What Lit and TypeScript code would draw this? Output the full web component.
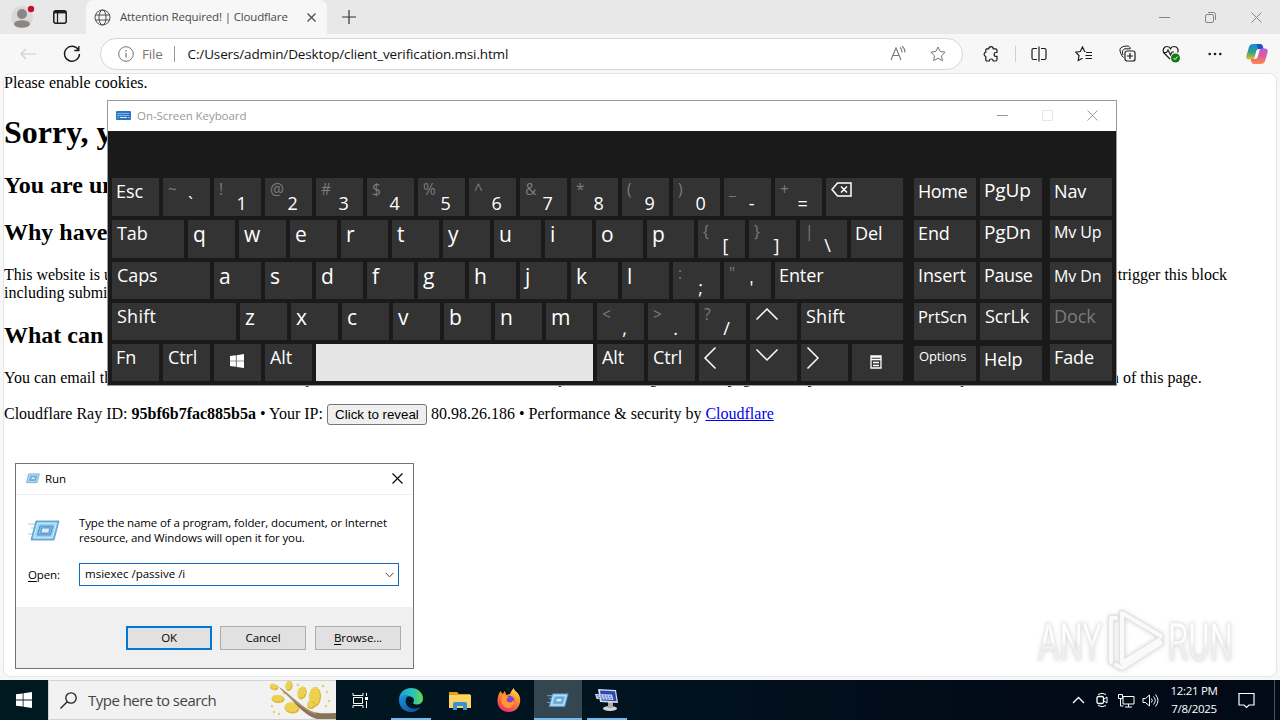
import { LitElement, css, html, svg, nothing, TemplateResult } from 'lit';
import { customElement, property } from 'lit/decorators.js';
import { classMap } from 'lit/directives/class-map.js';
import { styleMap } from 'lit/directives/style-map.js';

interface Key {
  label?: string;
  shift?: string;
  w?: number;
  cls?: string;
  icon?: TemplateResult;
}

const icon = (w: number, h: number, body: TemplateResult) => html`
  <svg xmlns="http://www.w3.org/2000/svg" width=${w} height=${h} viewBox="0 0 ${w} ${h}" fill="none" stroke="currentColor">${body}</svg>`;

const runIcon = (w: number, h: number) => html`
  <svg width=${w} height=${h} viewBox="0 0 32 22">
    <path d="M0 4h9M3 8h5M0 14h5" stroke="#a9cde6" stroke-width="1"/>
    <path d="M8 1h23l-5 19H3z" fill="#6fb3e0" stroke="#4d95c8" stroke-width=".8"/>
    <path d="M9.500 3h19l-4 15h-19z" fill="#9fd2f2" stroke="#d5edfb" stroke-width="1"/>
    <path d="M12 6h13l-2.500 9h-13z" fill="#7dbce6" stroke="#3d86bd" stroke-width=".8"/>
    <path d="M14 8h8l-1.300 5h-8z" fill="#d9ecf8" stroke="#3d86bd" stroke-width=".8"/>
  </svg>`;

const windowsLogo = (size: number) => html`
  <svg width=${size} height=${size} viewBox="0 0 16 16" fill="#fff">
    <path d="M0 2.300 6.700 1.400V7.600H0zM7.500 1.300 16 0V7.600H7.500zM0 8.400H6.700V14.600L0 13.700zM7.500 8.400H16V16L7.500 14.800z"/>
  </svg>`;

const arrow = (w: number, h: number, d: string) => icon(w, h, svg`<path d=${d} stroke-width="1.500"/>`);

const letters = (s: string): Key[] => [...s].map((label) => ({ label, cls: 'letter' }));
const pairs = (s: string): Key[] => s.split(' ').map((p) => ({ shift: p[0], label: p[1] }));

const MAIN_ROWS: Key[][] = [
  [
    { label: 'Esc', cls: 'edge' },
    ...pairs('~` !1 @2 #3 $4 %5 ^6 &7 *8 (9 )0 _- +='),
    {
      w: 77,
      icon: icon(21, 15, svg`<path d="M6.500 1H20v13H6.500L1 7.500zM10 4.500l6 6M16 4.500l-6 6" stroke-width="1.500"/>`),
      cls: 'back',
    },
  ],
  [{ label: 'Tab', w: 72 }, ...letters('qwertyuiop'), ...pairs('{[ }] |\\'), { label: 'Del', w: 52, cls: 'edge' }],
  [{ label: 'Caps', w: 98 }, ...letters('asdfghjkl'), ...pairs(':; "\''), { label: 'Enter', w: 128, cls: 'edge' }],
  [
    { label: 'Shift', w: 124, cls: 'wide' },
    ...letters('zxcvbnm'),
    ...pairs('<, >. ?/'),
    { cls: 'up', icon: arrow(24, 14, 'M1.500 12.500 12 2l10.500 10.500') },
    { label: 'Shift', w: 102, cls: 'wide' },
  ],
  [
    { label: 'Fn', cls: 'edge' },
    { label: 'Ctrl' },
    { cls: 'win', icon: windowsLogo(14) },
    { label: 'Alt' },
    { cls: 'space', w: 277 },
    { label: 'Alt' },
    { label: 'Ctrl' },
    { cls: 'left', icon: arrow(14, 24, 'M12.500 1.500 2 12l10.500 10.500') },
    { cls: 'down', icon: arrow(24, 14, 'M1.500 1.500 12 12 22.500 1.500') },
    { cls: 'right', icon: arrow(14, 24, 'M1.500 1.500 12 12 1.500 22.500') },
    {
      w: 51,
      cls: 'menu',
      icon: icon(12, 14, svg`<path d="M1 1h10v12H1zM1 2h10M1 4.500h10M3 7.500h6M3 10.500h6" stroke-width="1.300"/>`),
    },
  ],
];

const NAV_ROWS: Key[][] = [
  [{ label: 'Home', cls: 'edge tight' }, { label: 'PgUp', cls: 'edge tall' }],
  [{ label: 'End', cls: 'edge' }, { label: 'PgDn', cls: 'edge tall' }],
  [{ label: 'Insert', cls: 'edge' }, { label: 'Pause', cls: 'edge tight' }],
  [{ label: 'PrtScn', cls: 'edge medium' }, { label: 'ScrLk' }],
  [{ label: 'Options', cls: 'tiny short' }, { label: 'Help', cls: 'edge short' }],
];

const SIDE_ROWS: Key[][] = [
  [{ label: 'Nav', cls: 'edge' }],
  [{ label: 'Mv Up', cls: 'edge small' }],
  [{ label: 'Mv Dn', cls: 'edge small lower' }],
  [{ label: 'Dock', cls: 'edge off' }],
  [{ label: 'Fade', cls: 'edge' }],
];

@customElement('osk-block')
export class OskBlock extends LitElement {
  @property({ attribute: false }) rows: Key[][] = [];
  @property({ type: Number }) keyWidth = 47;

  private _key(k: Key) {
    const classes: Record<string, boolean> = { key: true, pair: !!k.shift };
    (k.cls ?? '').split(' ').filter(Boolean).forEach((c) => (classes[c] = true));
    return html`
      <div class=${classMap(classes)} style=${styleMap({ width: `${k.w ?? this.keyWidth}px` })}>
        ${k.shift ? html`<span class="shifted">${k.shift}</span>` : nothing}
        ${k.label ? html`<span class="label">${k.label}</span>` : nothing}
        ${k.icon ?? nothing}
      </div>`;
  }

  render() {
    return this.rows.map((row) => html`<div class="row">${row.map((k) => this._key(k))}</div>`);
  }

  static styles = css`
    :host {
      display: grid;
      grid-template-rows: 38px 38px 37px 37px 37px;
      gap: 4px;
      color: #fff;
      font: 18px/24px 'Open Sans', sans-serif;
    }
    .row {
      display: flex;
      gap: 4px;
    }
    .key {
      box-sizing: border-box;
      background: #333;
      display: flex;
      padding: 1px 0 0 5px;
      white-space: nowrap;
      letter-spacing: -0.1px;
    }
    .edge {
      padding-left: 4px;
    }
    .letter {
      font-size: 21px;
      padding-top: 2px;
    }
    .wide {
      letter-spacing: 0.25px;
    }
    .shifted {
      color: #7c7c7c;
      font-size: 15.5px;
      line-height: 21px;
      width: 11px;
    }
    .pair .label {
      margin-top: 12px;
      width: 23px;
      text-align: center;
    }
    .space {
      background: #e5e5e5;
    }
    .back {
      padding-top: 4px;
    }
    .up,
    .down {
      padding-top: 4px;
    }
    .left,
    .right {
      padding-top: 2px;
    }
    .left {
      padding-left: 4px;
    }
    .menu {
      padding: 11px 0 0 18px;
    }
    .win {
      padding: 10px 0 0 16px;
    }
    .tall {
      font-size: 19px;
      padding-top: 0;
    }
    .tight {
      letter-spacing: -0.4px;
    }
    .medium {
      font-size: 16.5px;
      padding-top: 2px;
    }
    .small {
      font-size: 16px;
      line-height: 23px;
    }
    .lower {
      padding-top: 3px;
    }
    .tiny {
      font-size: 13px;
      line-height: 20px;
      padding-top: 0;
    }
    .short {
      margin-top: 2px;
    }
    .off {
      color: #7c7c7c;
    }
  `;
}

@customElement('osk-window')
export class OskWindow extends LitElement {
  render() {
    return html`
      <div class="title">
        <svg width="15" height="9" viewBox="0 0 15 9">
          <rect width="15" height="9" rx="1" fill="#2a78c5"/>
          <path d="M1.500 2.500h12M1.500 4.500h12" stroke="#d5e7f7" stroke-dasharray="1 1"/>
          <path d="M1.500 6.500h1M4 6.500h7M12.500 6.500h1" stroke="#d5e7f7"/>
        </svg>
        <span class="name">On-Screen Keyboard</span>
        ${icon(11, 11, svg`<path d="M0 5.500h11"/>`)}
        <span class="max">${icon(11, 11, svg`<path d="M.5.500h10v10H.500z"/>`)}</span>
        ${icon(11, 11, svg`<path d="M.5.500l10 10M10.500.500l-10 10"/>`)}
      </div>
      <div class="body">
        <osk-block .rows=${MAIN_ROWS}></osk-block>
        <osk-block .rows=${NAV_ROWS} .keyWidth=${62}></osk-block>
        <osk-block class="side" .rows=${SIDE_ROWS} .keyWidth=${62}></osk-block>
      </div>
    `;
  }

  static styles = css`
    :host {
      display: flex;
      flex-direction: column;
      box-sizing: border-box;
      width: 1010px;
      height: 286px;
      border: 1px solid #9a9a9a;
      background: #1a1a1a;
    }
    .title {
      display: flex;
      align-items: center;
      box-sizing: border-box;
      height: 30px;
      background: #fff;
      color: #999;
      padding: 0 18px 2px 8px;
      font: 11.5px 'Open Sans', sans-serif;
    }
    .name {
      margin-left: 6px;
      flex: 1;
      letter-spacing: -0.06px;
    }
    .title svg + span:not(.name),
    .max + svg {
      margin-left: 34px;
    }
    .max {
      color: #e8e8e8;
      display: flex;
    }
    .body {
      display: flex;
      padding: 47px 0 0 4px;
      gap: 11px;
    }
    .side {
      margin-left: -3px;
    }
  `;
}

@customElement('run-dialog')
export class RunDialog extends LitElement {
  render() {
    return html`
      <div class="title">
        ${runIcon(15, 11)}
        <span>Run</span>
        ${icon(11, 11, svg`<path d="M.5.500l10 10M10.500.500l-10 10" stroke-width="1.100"/>`)}
      </div>
      <div class="content">
        <div class="intro">
          ${runIcon(32, 22)}
          <p>Type the name of a program, folder, document, or Internet<br />resource, and Windows will open it for you.</p>
        </div>
        <div class="open">
          <label><u>O</u>pen:</label>
          <div class="combo">
            <span>msiexec /passive /i</span>
            ${icon(9, 6, svg`<path d="M.5.800l4 4 4-4"/>`)}
          </div>
        </div>
      </div>
      <div class="footer">
        <div class="btn primary">OK</div>
        <div class="btn">Cancel</div>
        <div class="btn last"><span><u>B</u>rowse...</span></div>
      </div>
    `;
  }

  static styles = css`
    :host {
      display: flex;
      flex-direction: column;
      box-sizing: border-box;
      width: 399px;
      height: 206px;
      border: 1px solid #70757a;
      background: #fff;
      color: #000;
      font: 11.5px/15px 'Open Sans', sans-serif;
      letter-spacing: -0.12px;
    }
    .title {
      display: flex;
      align-items: center;
      box-sizing: border-box;
      height: 31px;
      padding: 0 10px 2px 9px;
      border-bottom: 1px solid #f0f0f0;
    }
    .title span {
      flex: 1;
      margin-left: 5px;
    }
    .content {
      flex: 1;
      padding: 20px 14px 0 12px;
    }
    .intro {
      display: flex;
      gap: 19px;
    }
    .intro svg {
      margin-top: 5px;
    }
    p {
      margin: 0;
      white-space: nowrap;
    }
    .open {
      display: flex;
      align-items: center;
      margin-top: 18px;
    }
    label {
      width: 51px;
    }
    u {
      text-underline-offset: 2px;
      text-decoration-thickness: 1px;
    }
    .combo {
      flex: 1;
      display: flex;
      align-items: center;
      justify-content: space-between;
      box-sizing: border-box;
      height: 23px;
      border: 1px solid #0f6cbd;
      padding: 0 4px 2px 5px;
      letter-spacing: 0;
    }
    .combo svg {
      color: #444;
      margin-top: 3px;
    }
    .footer {
      display: flex;
      justify-content: flex-end;
      gap: 8px;
      height: 42px;
      padding: 19px 12px 0 0;
      background: #f0f0f0;
    }
    .btn {
      display: flex;
      align-items: center;
      justify-content: center;
      box-sizing: border-box;
      width: 86px;
      height: 24px;
      padding-bottom: 2px;
      border: 1px solid #adadad;
      background: #e1e1e1;
    }
    .primary {
      border: 2px solid #0078d7;
    }
    .last {
      margin-left: 1px;
    }
  `;
}

@customElement('edge-browser')
export class EdgeBrowser extends LitElement {
  private _tabs() {
    return html`
      <div class="tabs">
        <div class="profile">
          <svg width="28" height="24" viewBox="0 0 28 24">
            <circle cx="12" cy="13" r="11" fill="#d9d9d9"/>
            <circle cx="12" cy="10" r="5" fill="#8b8785"/>
            <ellipse cx="12" cy="20" rx="8" ry="3.800" fill="#8b8785"/>
            <circle cx="21" cy="5" r="3.200" fill="#c50f2b"/>
          </svg>
        </div>
        <div class="tabmenu">
          ${icon(14, 14, svg`<rect x=".8" y=".8" width="12.400" height="12.400" rx="2" stroke-width="1.500"/><path d="M1 2.200h12" stroke-width="2.400"/><path d="M4.500 3v10" stroke-width="1.200"/>`)}
        </div>
        <div class="tab">
          ${icon(17, 17, svg`<circle cx="8.500" cy="8.500" r="7.500"/><ellipse cx="8.500" cy="8.500" rx="3.500" ry="7.500"/><path d="M1.500 6h14M1.500 11h14"/>`)}
          <span>Attention Required! | Cloudflare</span>
          ${icon(9, 9, svg`<path d="M.5.500l8 8M8.500.500l-8 8" stroke-width="1.200"/>`)}
        </div>
        <div class="plus">${icon(14, 14, svg`<path d="M7 0v14M0 7h14" stroke-width="1.200"/>`)}</div>
        <div class="controls">
          ${icon(11, 11, svg`<path d="M0 5.500h11"/>`)}
          ${icon(11, 11, svg`<rect x=".5" y="2.500" width="8" height="8" rx="1.500"/><path d="M3 .500h5.500a2 2 0 0 1 2 2V8"/>`)}
          ${icon(11, 11, svg`<path d="M.5.500l10 10M10.500.500l-10 10"/>`)}
        </div>
      </div>`;
  }

  private _toolbar() {
    return html`
      <div class="toolbar">
        <div class="back">${icon(16, 12, svg`<path d="M16 6H1M6 1 1 6l5 5" stroke-width="1.100"/>`)}</div>
        <div class="reload">${icon(18, 18, svg`<path d="M15.500 5A7.500 7.500 0 1 0 16.500 9M15.800 1v4.500h-4.500" stroke-width="1.400"/>`)}</div>
        <div class="address">
          ${icon(16, 16, svg`<circle cx="8" cy="8" r="7.300"/><path d="M8 7v4.500M8 4.300v1.400" stroke-width="1.200"/>`)}
          <span class="scheme">File</span>
          <span class="url">C:/Users/admin/Desktop/client_verification.msi.html</span>
          ${icon(17, 15, svg`<path d="M1 14 6 2l5 12M2.800 9.500h6.400M10 1.500a6 6 0 0 1 2 5M12 0a8 8 0 0 1 3 6.500" stroke-width="1.100"/>`)}
          ${icon(16, 16, svg`<path d="M8 1l2.200 4.500 4.900.700-3.600 3.500.9 4.900L8 12.300l-4.400 2.300.9-4.900L.900 6.200l4.900-.700z" stroke-linejoin="round"/>`)}
        </div>
        <div class="tool ext">${icon(16, 16, svg`<path d="M3.500 2.800h2.300a2.200 2.200 0 0 1 4.400 0h2.300a1.500 1.500 0 0 1 1.500 1.500v2.200h-1a1.900 1.900 0 0 0 0 3.800h1v3.200a1.500 1.500 0 0 1-1.500 1.500h-2.300a2 2 0 0 0-4 0H3.500A1.500 1.500 0 0 1 2.800 13.500v-3a2.200 2.200 0 0 1 0-4.300V4.300a1.500 1.500 0 0 1 .7-1.500z" stroke-linejoin="round" stroke-width="1.200"/>`)}</div>
        <div class="sep"></div>
        <div class="tool">${icon(16, 16, svg`<path d="M6 2.500H2.500a1.500 1.500 0 0 0-1.500 1.500v8a1.500 1.500 0 0 0 1.500 1.500H6M10 2.500h3.500A1.500 1.500 0 0 1 15 4v8a1.500 1.500 0 0 1-1.500 1.500H10M8 .500v15" stroke-width="1.200"/>`)}</div>
        <div class="tool">${icon(17, 16, svg`<path d="M10.500 5.500H9.700L7.500 1 5.300 5.500.700 6.200 4 9.500l-.8 5 4.300-2.300M11 6.500h6M10.500 9.500H17M10.500 12.500H17" stroke-width="1.200"/>`)}</div>
        <div class="tool">${icon(17, 17, svg`<rect x="6" y="6" width="10" height="10" rx="2" stroke-width="1.200"/><path d="M11 8v6M8 11h6" stroke-width="1.200"/><path d="M4.500 12.500C2.500 11 .500 6 1 4.200c.6-2 3-3 7-3.200 2 0 3 1 3.200 2.500M4 10C3 7 3.200 4.500 6 3.800h5.500"/>`)}</div>
        <div class="tool">${icon(19, 18, svg`<path d="M8 14 2 8C0 5 2 1.500 5 1.500c2 0 3.300 1.700 3.500 2.200C8.700 3.200 10 1.500 12 1.500c3.500 0 5 3.500 3.500 6M1 7.500h3.500L6 5l2.500 5L10 7h2" stroke-width="1.200"/><circle cx="13.500" cy="13" r="4.500" fill="#107c10" stroke="none"/><path d="M11.500 13l1.500 1.500 2.700-3" stroke="#fff"/>`)}</div>
        <div class="tool dots">${icon(14, 4, svg`<g fill="currentColor" stroke="none"><circle cx="1.700" cy="2" r="1.300"/><circle cx="7" cy="2" r="1.300"/><circle cx="12.300" cy="2" r="1.300"/></g>`)}</div>
        <div class="copilot">
          <svg width="22" height="22" viewBox="0 0 22 22">
            <defs>
              <linearGradient id="a" x1="0" y1="0" x2="0" y2="1">
                <stop stop-color="#168bdc"/><stop offset=".5" stop-color="#2f9e8f"/><stop offset="1" stop-color="#e5c01f"/>
              </linearGradient>
              <linearGradient id="b" x1="0" y1="0" x2="0" y2="1">
                <stop stop-color="#b45be8"/><stop offset=".5" stop-color="#e8588f"/><stop offset="1" stop-color="#fb8a4c"/>
              </linearGradient>
            </defs>
            <path d="M7 1h7c1.700 0 2.300 1 2.800 2.500L17.500 6H13c-2 0-2.500 1-3 3l-1.500 5.500c-.5 1.500-1 2-2.500 2H3C.700 16.500-.100 15 .500 12.500L3 4c.6-2 2-3 4-3z" fill="url(#a)"/>
            <path d="M10.500 1H14c1.700 0 2.300 1 2.800 2.500L17.500 6H12z" fill="#1c52c4"/>
            <path d="M15 21H8c-1.700 0-2.300-1-2.800-2.500L4.700 16H9c2 0 2.500-1 3-3l1.500-5.500c.5-1.500 1-2 2.500-2h3c2.300 0 3.100 1.500 2.500 4L19 18c-.6 2-2 3-4 3z" fill="url(#b)"/>
          </svg>
        </div>
      </div>`;
  }

  render() {
    return html`
      ${this._tabs()} ${this._toolbar()}
      <div class="page">
        <div>Please enable cookies.</div>
        <h1>Sorry, you have been blocked</h1>
        <h2 class="sub">You are unable to access this website</h2>
        <h2>Why have I been blocked?</h2>
        <p>
          This website is using a security service to protect itself from online attacks. The action you just performed
          triggered the security solution. There are several actions that could trigger this block including submitting a
          certain word or phrase, a SQL command or malformed data.
        </p>
        <h2>What can I do to resolve this?</h2>
        <p>
          You can email the site owner to let them know you were blocked. Please include what you were doing when this page
          came up and the Cloudflare Ray ID found at the bottom of this page.
        </p>
        <p class="ray">
          Cloudflare Ray ID: <b>95bf6b7fac885b5a</b> • Your IP: <button>Click to reveal</button> 80.98.26.186 • Performance
          &amp; security by <a>Cloudflare</a>
        </p>
      </div>
    `;
  }

  static styles = css`
    :host {
      display: flex;
      flex-direction: column;
      height: 680px;
      background: #f7f7f7;
      font-family: 'Open Sans', sans-serif;
      color: #1b1b1b;
    }
    svg {
      flex: none;
      display: block;
    }
    .tabs {
      display: flex;
      align-items: center;
      height: 34px;
      background: #e8e8e8;
    }
    .profile {
      width: 53px;
      box-sizing: border-box;
      padding: 0 0 2px 10px;
    }
    .tabmenu {
      width: 33px;
    }
    .tab {
      display: flex;
      align-items: center;
      box-sizing: border-box;
      width: 241px;
      height: 34px;
      padding: 0 11px 0 8px;
      border-radius: 8px 8px 0 0;
      background: #f7f7f7;
      color: #4a4a4a;
      font-size: 11.5px;
    }
    .tab span {
      flex: 1;
      margin-left: 9px;
      padding-bottom: 2px;
      letter-spacing: -0.15px;
      white-space: nowrap;
    }
    .plus {
      margin-left: 15px;
      flex: 1;
      color: #333;
    }
    .controls {
      display: flex;
      gap: 35px;
      padding-right: 18px;
      color: #858585;
    }
    .toolbar {
      display: flex;
      align-items: center;
      height: 39px;
    }
    .back {
      width: 43px;
      padding-left: 20px;
      color: #ccc;
    }
    .reload {
      width: 37px;
    }
    .address {
      display: flex;
      align-items: center;
      box-sizing: border-box;
      width: 863px;
      height: 32px;
      border: 1px solid #d6d6d6;
      border-radius: 16px;
      background: #fff;
      padding: 0 16px 0 17px;
      color: #767676;
      font-size: 13.5px;
    }
    .address svg:last-child {
      margin-left: 23px;
    }
    .scheme {
      margin-left: 8px;
      padding-right: 11px;
      border-right: 1px solid #999;
      line-height: 16px;
      letter-spacing: -0.2px;
    }
    .url {
      flex: 1;
      margin-left: 13px;
      color: #111;
      letter-spacing: -0.14px;
    }
    .tool {
      display: flex;
      justify-content: center;
      width: 44.2px;
    }
    .ext {
      width: 56px;
    }
    .dots {
      width: 43px;
    }
    .sep {
      width: 1px;
      height: 16px;
      margin: 0 1px 0 -4px;
      background: #d0d0d0;
    }
    .copilot {
      margin-left: 9px;
    }
    .page {
      box-sizing: border-box;
      width: 1274px;
      height: 604px;
      margin-left: 3px;
      border: 1px solid #e6e6e6;
      border-radius: 8px;
      background: #fff;
      color: #000;
      font: 16px/18px 'Liberation Serif', serif;
      overflow: hidden;
    }
    h1 {
      margin: 21.5px 0;
      font-size: 32px;
      line-height: 37px;
    }
    h2 {
      margin: 20px 0;
      font-size: 24px;
      line-height: 27px;
    }
    .sub {
      margin-top: 20.5px;
    }
    p {
      margin: 16px 0;
    }
    h2 + p {
      margin-top: 20px;
    }
    .ray {
      margin-top: 15px;
      line-height: 21px;
    }
    button {
      box-sizing: border-box;
      width: 100px;
      height: 21px;
      padding: 0;
      border: 1px solid #767676;
      border-radius: 3px;
      background: #efefef;
      font: 13.333px 'Liberation Sans', sans-serif;
      color: #000;
    }
    a {
      color: #0000ee;
      text-decoration: underline;
    }
  `;
}

@customElement('task-bar')
export class TaskBar extends LitElement {
  private _wattle() {
    const blobs = [
      [4, 6, 4.5, 3, 20], [19, 5, 3.5, 5, 10], [8, 18, 6.5, 4, 5], [32, 12, 4.5, 6.5, 15],
      [22, 27, 7.5, 5.5, 10], [45, 16, 6, 10, 3], [41, 24, 4, 4, 0],
    ];
    const dots = [[2, 25], [4, 31], [9, 33], [53, 5], [57, 11], [59, 20], [28, 4], [14, 12], [56, 25]];
    return html`
      <svg width="66" height="38" viewBox="0 0 66 38">
        ${blobs.map(([x, y, rx, ry, r]) => svg`
          <ellipse cx=${x} cy=${y} rx=${rx} ry=${ry} fill="#dcb52c" transform="rotate(${r} ${x} ${y})"/>
          <ellipse cx=${x - 0.7} cy=${y - 0.7} rx=${rx - 1} ry=${ry - 1} fill="#ecd04e" stroke="#f6e48a" stroke-dasharray="1 2" transform="rotate(${r} ${x} ${y})"/>`)}
        ${dots.map(([x, y]) => svg`<circle cx=${x} cy=${y} r="1.200" fill="#e9cf60"/>`)}
        <path d="M9 6C19 12 29 24 41 30c8 3.500 17 2 25 2v6H47C37 35 29 27 21 18 17 14 12 10 9 6z" fill="#8b7355"/>
        <path d="M11 8C20 15 31 28 46 33" stroke="#b39b77" stroke-width="1.200" fill="none"/>
      </svg>`;
  }

  render() {
    return html`
      <div class="start">${windowsLogo(16)}</div>
      <div class="search">
        ${icon(17, 17, svg`<circle cx="11" cy="6" r="5.200" stroke-width="1.300"/><path d="M7.200 9.800.500 16.500" stroke-width="1.300"/>`)}
        <span>Type here to search</span>
        ${this._wattle()}
      </div>
      <div class="app view">
        ${icon(17, 15, svg`<path d="M1 0v2.500h10V0M1 15v-2.500h10V15M1.500 4.500h9v6h-9zM14.500 0v3M14.500 8v7"/><path d="M13 4h3v3h-3z" fill="#fff" stroke="none"/>`)}
      </div>
      <div class="app line edge">
        <svg width="26" height="26" viewBox="0 0 26 26">
          <defs>
            <linearGradient id="e" x1="0" y1="0" x2="1" y2="0"><stop stop-color="#1a9fe0"/><stop offset=".6" stop-color="#2cc4b4"/><stop offset="1" stop-color="#6ad84b"/></linearGradient>
            <linearGradient id="f" x1="0" y1="0" x2="1" y2="1"><stop stop-color="#1a93dd"/><stop offset="1" stop-color="#0c4a98"/></linearGradient>
          </defs>
          <path d="M1 13C1 6 6 1 13 1s12 5 12 10.500c0 4-3 6-6.500 6-3 0-4-1.200-3-2.500s.8-4.500-3-5.500C7 8 2 9.500 1 13z" fill="url(#e)"/>
          <path d="M1 13c1-4 6-5.500 10-4.200-3 1.200-4 5-2.800 8.200 1.800 4.500 8 6.500 14.300 3C20 24 16.500 25 13 25 6 25 1 20 1 13z" fill="url(#f)"/>
        </svg>
      </div>
      <div class="app folder">
        <svg width="22" height="19" viewBox="0 0 22 19">
          <path d="M0 1h8l2 2h11v4H0z" fill="#e89c22"/>
          <path d="M0 4h22v13H0z" fill="#fcd462"/>
          <path d="M4 19v-6a2 2 0 0 1 2-2h10a2 2 0 0 1 2 2v6h-4v-4H8v4z" fill="#3b8fd4"/>
        </svg>
      </div>
      <div class="app folder">
        <svg width="24" height="24" viewBox="0 0 24 24">
          <defs><linearGradient id="g" x1=".8" y1="0" x2=".3" y2="1"><stop stop-color="#ffe14d"/><stop offset=".45" stop-color="#ff8a26"/><stop offset="1" stop-color="#f0287a"/></linearGradient></defs>
          <path d="M13 6C14 3 16 1 16.500 0c1 3 4 4 5.500 7 3.500 7-1 17-10 17C5 24 0 19 .500 12 .800 8 2 5 3.500 3l2 3L8 3l1 4z" fill="url(#g)"/>
          <circle cx="12" cy="13" r="5.500" fill="#8143d6"/>
          <path d="M5 8c3-1 5 0 7 1.500-2 0-3 1.500-2 3.500s5 2 7-1c1 5-2 8-6 8-5 0-8-6-6-12z" fill="#ff9a2e"/>
        </svg>
      </div>
      <div class="app line active">${runIcon(22, 15)}</div>
      <div class="app line">
        <svg width="24" height="24" viewBox="0 0 24 24">
          <ellipse cx="15" cy="20.500" rx="7" ry="2.500" fill="#d5d5d0"/>
          <path d="M13 14h5v6h-5z" fill="#aaa"/>
          <path d="M3 1l18 1 2 13-18-1z" fill="#d9dde5"/>
          <path d="M5 2.500l15 .8 1.500 10-15-.8z" fill="#2748b8"/>
          <path d="M0 6l17 .5 1.500 5.500-17-1z" fill="#c9d4ee"/>
          <path d="M2 7.800l14 .5M3 9.800l14 .5" stroke="#4c68b4" stroke-dasharray="2 1"/>
        </svg>
      </div>
      <div class="tray">
        <div class="cell">${icon(13, 8, svg`<path d="M1 7l5.500-5.500L12 7" stroke-width="1.300"/>`)}</div>
        <div class="cell">${icon(12, 16, svg`<rect x="1" y="4.500" width="6.500" height="7" rx="1.500" stroke-width="1.300"/><path d="M8 7l3-2v6L8 9M2 2.500Q6 0 10 2.500M2 13.500Q6 16 10 13.500"/>`)}</div>
        <div class="cell">${icon(17, 15, svg`<path d="M5 3.500h11v7.500H5zM10.500 11v3M7 14h7M2.500 6v7h3"/><path d="M.5 1.500h4v4h-4z" fill="#06101d"/>`)}</div>
        <div class="cell">${icon(17, 15, svg`<path d="M1 5.500h2.500l4-3.500v11l-4-3.500H1zM9.500 5.500q1.500 2 0 4M11.500 3.500q3.500 4 0 8M13.500 1.500q5 6 0 12"/>`)}</div>
      </div>
      <div class="clock"><div>12:21 PM</div><div>7/8/2025</div></div>
      <div class="note">${icon(17, 17, svg`<path d="M1 1.500h15v11.500h-5L8.500 15.500 6 13H1z" stroke-width="1.200"/>`)}</div>
      <div class="desk"></div>
    `;
  }

  static styles = css`
    :host {
      display: flex;
      height: 40px;
      background: linear-gradient(90deg, #001820, #00141f 45%, #020a18 80%);
      color: #fff;
      font-family: 'Open Sans', sans-serif;
    }
    svg {
      flex: none;
      display: block;
    }
    .start {
      display: flex;
      align-items: center;
      justify-content: center;
      width: 48px;
    }
    .search {
      display: flex;
      align-items: center;
      box-sizing: border-box;
      width: 288px;
      border: 1px solid #cfd3d4;
      border-right: 0;
      background: #f2f2f2;
      padding-left: 11px;
      color: #222;
      font-size: 15px;
    }
    .search span {
      flex: 1;
      margin-left: 11px;
      color: #444;
      letter-spacing: -0.52px;
      white-space: nowrap;
    }
    .app {
      display: flex;
      align-items: center;
      justify-content: center;
      box-sizing: border-box;
      width: 49px;
    }
    .view {
      width: 48px;
      margin-right: 2px;
    }
    .edge {
      width: 50px;
    }
    .folder {
      padding-right: 2px;
    }
    .line {
      background: linear-gradient(#76b9ed, #76b9ed) center bottom / 40px 2px no-repeat;
    }
    .active {
      width: 48px;
      background: linear-gradient(#76b9ed, #76b9ed) center bottom / 48px 2px no-repeat #34464f;
    }
    .tray {
      display: flex;
      align-items: center;
      justify-content: flex-end;
      flex: 1;
      margin-right: -3px;
    }
    .cell {
      display: flex;
      justify-content: center;
      width: 24px;
    }
    .clock {
      display: flex;
      flex-direction: column;
      justify-content: center;
      width: 70px;
      text-align: center;
      font-size: 11.5px;
      line-height: 18px;
      letter-spacing: -0.3px;
      padding-bottom: 1px;
    }
    .note {
      display: flex;
      align-items: center;
      justify-content: center;
      width: 34px;
    }
    .desk {
      width: 5px;
      margin-left: 11px;
      border-left: 1px solid #4a5260;
    }
  `;
}

@customElement('app-root')
export class AppRoot extends LitElement {
  render() {
    return html`
      <edge-browser></edge-browser>
      <task-bar></task-bar>
      <osk-window></osk-window>
      <run-dialog></run-dialog>
      <svg class="mark" width="204" height="68" viewBox="0 0 204 68">
        <defs>
          <linearGradient id="m" x1="0" y1="0" x2="0" y2="1">
            <stop offset=".45" stop-color="#fff"/><stop offset=".6" stop-color="#efefef"/>
          </linearGradient>
        </defs>
        <g font-family="Roboto, sans-serif" font-size="52" fill="url(#m)" stroke="#e9e9e9" stroke-width=".6">
          <text x="2" y="53" textLength="64" lengthAdjust="spacingAndGlyphs">ANY</text>
          <text x="132" y="53" textLength="65" lengthAdjust="spacingAndGlyphs">RUN</text>
        </g>
        <g fill="none" stroke-linejoin="round" stroke-linecap="round">
          <path d="M80 11h-5v44M86 45V6l39 23M86 24v32l37-23M125 36 86 61l-6-3" stroke="#e2e2e2" stroke-width="6"/>
          <path d="M80 11h-5v44M86 45V6l39 23M86 24v32l37-23M125 36 86 61l-6-3" stroke="#fafafa" stroke-width="4"/>
        </g>
      </svg>
    `;
  }

  static styles = css`
    :host {
      display: block;
      position: relative;
      width: 1280px;
      height: 720px;
      overflow: hidden;
    }
    osk-window {
      position: absolute;
      left: 107px;
      top: 100px;
    }
    run-dialog {
      position: absolute;
      left: 15px;
      top: 463px;
    }
    .mark {
      position: absolute;
      left: 1036px;
      top: 607px;
      filter: drop-shadow(0 0 2px #d4d4d4);
    }
  `;
}
